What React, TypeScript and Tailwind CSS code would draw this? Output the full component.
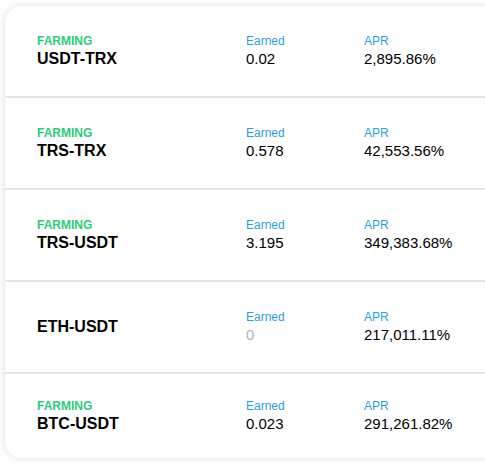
const farms = [
  { pair: "USDT-TRX", farming: true, earned: "0.02", apr: "2,895.86%" },
  { pair: "TRS-TRX", farming: true, earned: "0.578", apr: "42,553.56%" },
  { pair: "TRS-USDT", farming: true, earned: "3.195", apr: "349,383.68%" },
  { pair: "ETH-USDT", farming: false, earned: "0", apr: "217,011.11%" },
  { pair: "BTC-USDT", farming: true, earned: "0.023", apr: "291,261.82%" },
];

export default function App() {
  return (
    <div className="h-screen w-screen overflow-hidden bg-white font-['Liberation_Sans',Arial,sans-serif]">
      <div className="ml-[5px] mt-[6px] w-[520px] overflow-hidden rounded-2xl bg-white shadow-[0_0_7px_rgba(0,0,0,0.14)]">
        {farms.map((f, i) => (
          <div
            key={f.pair}
            className={
              i < farms.length - 1
                ? "grid h-[92px] grid-cols-[209px_118px_1fr] items-center border-b-2 border-[#e6e6e6] pl-8"
                : "grid h-[84px] grid-cols-[209px_118px_1fr] items-center pl-8"
            }
          >
            <div className="flex flex-col">
              {f.farming && (
                <span className="text-[12px] font-bold leading-[16px] text-[#2ccb7b]">FARMING</span>
              )}
              <span className="text-[16px] font-bold leading-[20px] text-black">{f.pair}</span>
            </div>
            <div className="flex flex-col">
              <span className="text-[12px] leading-[16px] text-[#2a9fe0]">Earned</span>
              <span
                className={
                  f.earned === "0"
                    ? "text-[15px] leading-[20px] text-[#b3b3b3]"
                    : "text-[15px] leading-[20px] text-black"
                }
              >
                {f.earned}
              </span>
            </div>
            <div className="flex flex-col">
              <span className="text-[12px] leading-[16px] text-[#2a9fe0]">APR</span>
              <span className="text-[15px] leading-[20px] text-black">{f.apr}</span>
            </div>
          </div>
        ))}
      </div>
    </div>
  );
}
